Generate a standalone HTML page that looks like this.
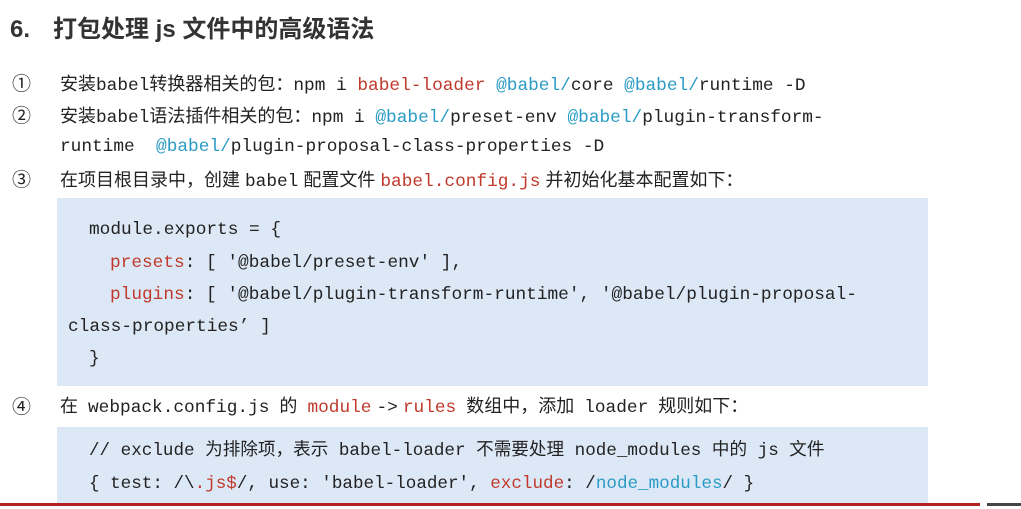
<!DOCTYPE html>
<html><head><meta charset="utf-8"><style>
body{margin:0;width:1021px;height:509px;background:#fff;position:relative;overflow:hidden;font-family:"Liberation Sans","Noto Sans CJK SC",sans-serif;color:#222}
.l{position:absolute;white-space:pre;font-size:18px;line-height:20px}
.m{font-family:"Liberation Mono","Noto Sans CJK SC",monospace;font-size:17.8px}
.r{color:#c0392b}.b{color:#2a9bc4}
.box{position:absolute;background:#dde8f7}
.n{position:absolute;left:12px;font-size:19px;line-height:22px}
</style></head><body>
<div class="l" style="left:10px;top:15px;font-size:24px;font-weight:bold;line-height:30px;color:#333">6.</div>
<div class="l" style="left:53px;top:15px;font-size:24px;font-weight:bold;line-height:30px;color:#333">打包处理 js 文件中的高级语法</div>
<div class="n" style="top:74px">①</div>
<div class="l" style="left:60px;top:74px">安装<span class="m">babel</span>转换器相关的包：<span class="m">npm i <span class="r">babel-loader</span> <span class="b">@babel/</span>core <span class="b">@babel/</span>runtime -D</span></div>
<div class="n" style="top:106px">②</div>
<div class="l" style="left:60px;top:106px">安装<span class="m">babel</span>语法插件相关的包：<span class="m">npm i <span class="b">@babel/</span>preset-env <span class="b">@babel/</span>plugin-transform-</span></div>
<div class="l m" style="left:60px;top:137px">runtime  <span class="b">@babel/</span>plugin-proposal-class-properties -D</div>
<div class="n" style="top:170px">③</div>
<div class="l" style="left:60px;top:170px">在项目根目录中，创建 <span class="m">babel</span> 配置文件 <span class="m r">babel.config.js</span> 并初始化基本配置如下：</div>
<div class="box" style="left:57px;top:198px;width:871px;height:188px"></div>
<div class="l m" style="left:89px;top:220px">module.exports = {</div>
<div class="l m" style="left:110px;top:253px"><span class="r">presets</span>: [ '@babel/preset-env' ],</div>
<div class="l m" style="left:110px;top:285px"><span class="r">plugins</span>: [ '@babel/plugin-transform-runtime', '@babel/plugin-proposal-</div>
<div class="l m" style="left:68px;top:317px">class-properties’ ]</div>
<div class="l m" style="left:89px;top:349px">}</div>
<div class="n" style="top:397px">④</div>
<div class="l" style="left:60px;top:396px">在  <span class="m">webpack.config.js</span>  的  <span class="m r">module</span> <span class="m">-&gt;</span> <span class="m r">rules</span>  数组中，添加  <span class="m">loader</span>  规则如下：</div>
<div class="box" style="left:57px;top:427px;width:871px;height:76px"></div>
<div class="l m" style="left:89px;top:441px;font-size:17.6px">// exclude 为排除项，表示 babel-loader 不需要处理 node_modules 中的 js 文件</div>
<div class="l m" style="left:89px;top:474px;font-size:17.6px">{ test: /\<span class="r">.js$</span>/, use: 'babel-loader', <span class="r">exclude</span>: /<span class="b">node_modules</span>/ }</div>
<div style="position:absolute;left:0;top:503px;width:980px;height:3px;background:#b22222"></div>
<div style="position:absolute;left:987px;top:503px;width:34px;height:3px;background:#444"></div>
</body></html>
